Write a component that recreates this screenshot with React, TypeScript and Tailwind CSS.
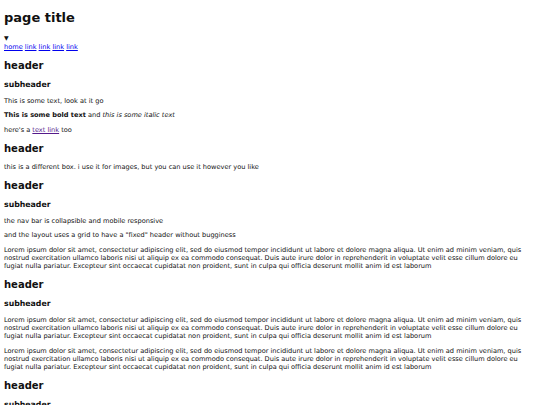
import React from "react";

const lorem =
  "Lorem ipsum dolor sit amet, consectetur adipiscing elit, sed do eiusmod tempor incididunt ut labore et dolore magna aliqua. Ut enim ad minim veniam, quis nostrud exercitation ullamco laboris nisi ut aliquip ex ea commodo consequat. Duis aute irure dolor in reprehenderit in voluptate velit esse cillum dolore eu fugiat nulla pariatur. Excepteur sint occaecat cupidatat non proident, sunt in culpa qui officia deserunt mollit anim id est laborum";

function H2({ children }: { children: React.ReactNode }) {
  return <h2 className="text-[10px] font-bold my-[9px]">{children}</h2>;
}
function H3({ children }: { children: React.ReactNode }) {
  return <h3 className="text-[7.8px] font-bold my-[8.2px]">{children}</h3>;
}
function P({ children }: { children: React.ReactNode }) {
  return <p className="my-[6.5px]">{children}</p>;
}

export default function App() {
  return (
    <div className="px-[4px] py-px text-[6.6px] leading-[normal] text-[#111] bg-white min-h-[405px] font-['DejaVu_Sans',sans-serif]">
      <header>
        <h1 className="text-[13px] font-bold mt-[9px] mb-[9px]">page title</h1>
        <nav>
          <div className="h-[8.5px] leading-[8.5px]">
            <span className="text-[6px]">▼</span>
          </div>
          <div>
            <a href="#" className="underline text-[#0000ee]">home</a>{" "}
            <a href="#" className="underline text-[#0000ee]">link</a>{" "}
            <a href="#" className="underline text-[#0000ee]">link</a>{" "}
            <a href="#" className="underline text-[#0000ee]">link</a>{" "}
            <a href="#" className="underline text-[#0000ee]">link</a>
          </div>
        </nav>
      </header>
      <main>
        <section>
          <H2>header</H2>
          <H3>subheader</H3>
          <P>This is some text, look at it go</P>
          <P>
            <b>This is some bold text</b> and <i>this is some italic text</i>
          </P>
          <P>
            here's a <a href="#" className="underline text-[#551a8b]">text link</a> too
          </P>
        </section>
        <section>
          <H2>header</H2>
          <P>this is a different box. i use it for images, but you can use it however you like</P>
        </section>
        <section>
          <H2>header</H2>
          <H3>subheader</H3>
          <P>the nav bar is collapsible and mobile responsive</P>
          <P>and the layout uses a grid to have a "fixed" header without bugginess</P>
          <P>{lorem}</P>
        </section>
        <section>
          <H2>header</H2>
          <H3>subheader</H3>
          <P>{lorem}</P>
          <P>{lorem}</P>
        </section>
        <section>
          <H2>header</H2>
          <H3>subheader</H3>
          <P>{lorem}</P>
        </section>
      </main>
    </div>
  );
}
